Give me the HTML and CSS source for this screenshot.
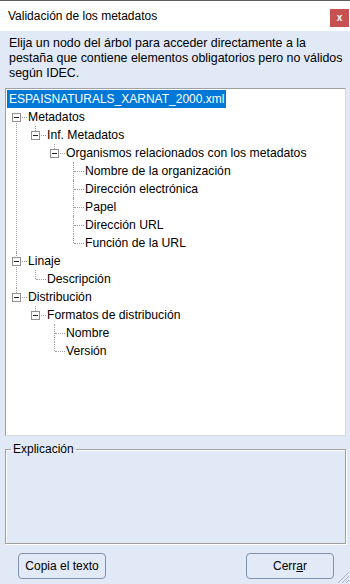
FILE: index.html
```html
<!DOCTYPE html>
<html lang="es">
<head>
  <meta charset="UTF-8">
  <meta name="viewport" content="width=device-width, initial-scale=1.0">
  <title>Validación de los metadatos</title>
  <link rel="stylesheet" href="styles.css">
</head>
<body>
  <div class="window">
    <div class="titlebar">
      <span class="title">Validación de los metadatos</span>
      <button class="close" type="button">x</button>
    </div>

    <div class="content">
      <p class="intro">Elija un nodo del árbol para acceder directamente a la pestaña que contiene elementos obligatorios pero no válidos según IDEC.</p>

      <div class="treebox">
        <div class="root"><span class="selected">ESPAISNATURALS_XARNAT_2000.xml</span></div>
        <ul class="tree">
          <li>
            <div class="node"><span class="toggle"></span><span class="label">Metadatos</span></div>
            <ul>
              <li>
                <div class="node"><span class="toggle"></span><span class="label">Inf. Metadatos</span></div>
                <ul>
                  <li>
                    <div class="node"><span class="toggle"></span><span class="label">Organismos relacionados con los metadatos</span></div>
                    <ul>
                      <li><div class="node leaf"><span class="label">Nombre de la organización</span></div></li>
                      <li><div class="node leaf"><span class="label">Dirección electrónica</span></div></li>
                      <li><div class="node leaf"><span class="label">Papel</span></div></li>
                      <li><div class="node leaf"><span class="label">Dirección URL</span></div></li>
                      <li><div class="node leaf"><span class="label">Función de la URL</span></div></li>
                    </ul>
                  </li>
                </ul>
              </li>
            </ul>
          </li>
          <li>
            <div class="node"><span class="toggle"></span><span class="label">Linaje</span></div>
            <ul>
              <li><div class="node leaf"><span class="label">Descripción</span></div></li>
            </ul>
          </li>
          <li>
            <div class="node"><span class="toggle"></span><span class="label">Distribución</span></div>
            <ul>
              <li>
                <div class="node"><span class="toggle"></span><span class="label">Formatos de distribución</span></div>
                <ul>
                  <li><div class="node leaf"><span class="label">Nombre</span></div></li>
                  <li><div class="node leaf"><span class="label">Versión</span></div></li>
                </ul>
              </li>
            </ul>
          </li>
        </ul>
      </div>

      <fieldset class="explain">
        <legend>Explicación</legend>
        <div class="explain-body"></div>
      </fieldset>

      <div class="buttons">
        <button class="btn" type="button">Copia el texto</button>
        <button class="btn" type="button">Cerr<u>a</u>r</button>
      </div>
    </div>

    <svg class="grip" width="13" height="13" viewBox="0 0 13 13">
      <path d="M12 1 L1 12 M12 5 L5 12 M12 9 L9 12" stroke="#a9b3c0" stroke-width="1" fill="none"/>
    </svg>
  </div>
</body>
</html>
```

FILE: styles.css
```css
/* Reset */
body, p, ul, fieldset, legend {
  margin: 0;
  padding: 0;
}

body {
  font-family: 'Liberation Sans', Arial, sans-serif;
  font-size: 12px;
  color: #000;
  background-color: #e0e9f5;
}

.window {
  position: relative;
  width: 350px;
  height: 584px;
  background-color: #e0e9f5;
  overflow: hidden;
}

/* Title bar */
.titlebar {
  display: flex;
  justify-content: space-between;
  align-items: flex-start;
  height: 30px;
  background-color: #fff;
  border-top: 1px solid #5f5f5f;
}

.title {
  margin: 8px 0 0 8px;
  line-height: 14px;
}

.close {
  width: 19px;
  height: 18px;
  margin: 8px 1px 0 0;
  padding: 0;
  border: none;
  background-color: #c75050;
  color: #fff;
  font-family: 'Liberation Sans', Arial, sans-serif;
  font-size: 10px;
  font-weight: bold;
  line-height: 16px;
}

/* Content */
.content {
  display: flex;
  flex-direction: column;
  padding: 5px 4px 0 5px;
}

.intro {
  padding: 0 0 0 4px;
  font-size: 12.4px;
  line-height: 15px;
}

/* Tree view */
.treebox {
  height: 348px;
  margin-top: 7px;
  padding: 1px;
  box-sizing: border-box;
  background-color: #fff;
  border: 1px solid;
  border-color: #a0a0a0 #dadada #dadada #a0a0a0;
}

.root {
  height: 18px;
  line-height: 18px;
}

.selected {
  display: inline-block;
  padding: 0 2px;
  background-color: #0078d7;
  color: #fff;
}

.tree,
.tree ul {
  list-style: none;
}

.tree {
  padding-left: 1px;
}

.tree ul {
  padding-left: 19px;
}

.tree li {
  position: relative;
}

/* dotted connector lines */
.tree li::before {
  content: '';
  position: absolute;
  left: 8px;
  top: 0;
  bottom: 0;
  border-left: 1px dotted #a0a0a0;
}

.tree li:last-child::before {
  bottom: auto;
  height: 9px;
}

.tree > li:first-child::before {
  top: 9px;
  bottom: 0;
  height: auto;
}

.tree li::after {
  content: '';
  position: absolute;
  left: 9px;
  top: 9px;
  width: 10px;
  border-top: 1px dotted #a0a0a0;
}

.node {
  display: flex;
  align-items: center;
  height: 18px;
}

.node.leaf {
  padding-left: 20px;
}

.toggle {
  position: relative;
  z-index: 1;
  width: 9px;
  height: 9px;
  margin: 0 7px 0 4px;
  box-sizing: border-box;
  border: 1px solid #919191;
  background-color: #fff;
}

.toggle::before {
  content: '';
  position: absolute;
  left: 1px;
  top: 3px;
  width: 5px;
  height: 1px;
  background-color: #222;
}

.label {
  white-space: nowrap;
  font-size: 12.2px;
  line-height: 18px;
}

/* Explanation group */
.explain {
  margin-top: 6px;
  border: 1px solid #a0a0a0;
  box-shadow: 1px 1px 0 #fff, inset 1px 1px 0 #fff;
}

.explain legend {
  margin-left: 5px;
  padding: 0 2px;
  line-height: 14px;
}

.explain-body {
  height: 87px;
}

/* Buttons */
.buttons {
  display: flex;
  justify-content: space-between;
  margin-top: 9px;
  padding: 0 12px 0 13px;
}

.btn {
  width: 88px;
  height: 26px;
  padding: 0;
  border: 1px solid #7f93ab;
  border-radius: 4px;
  background-color: #e1eaf6;
  color: #000;
  font-family: 'Liberation Sans', Arial, sans-serif;
  font-size: 12px;
}

.grip {
  position: absolute;
  right: 0;
  bottom: 0;
}
```
